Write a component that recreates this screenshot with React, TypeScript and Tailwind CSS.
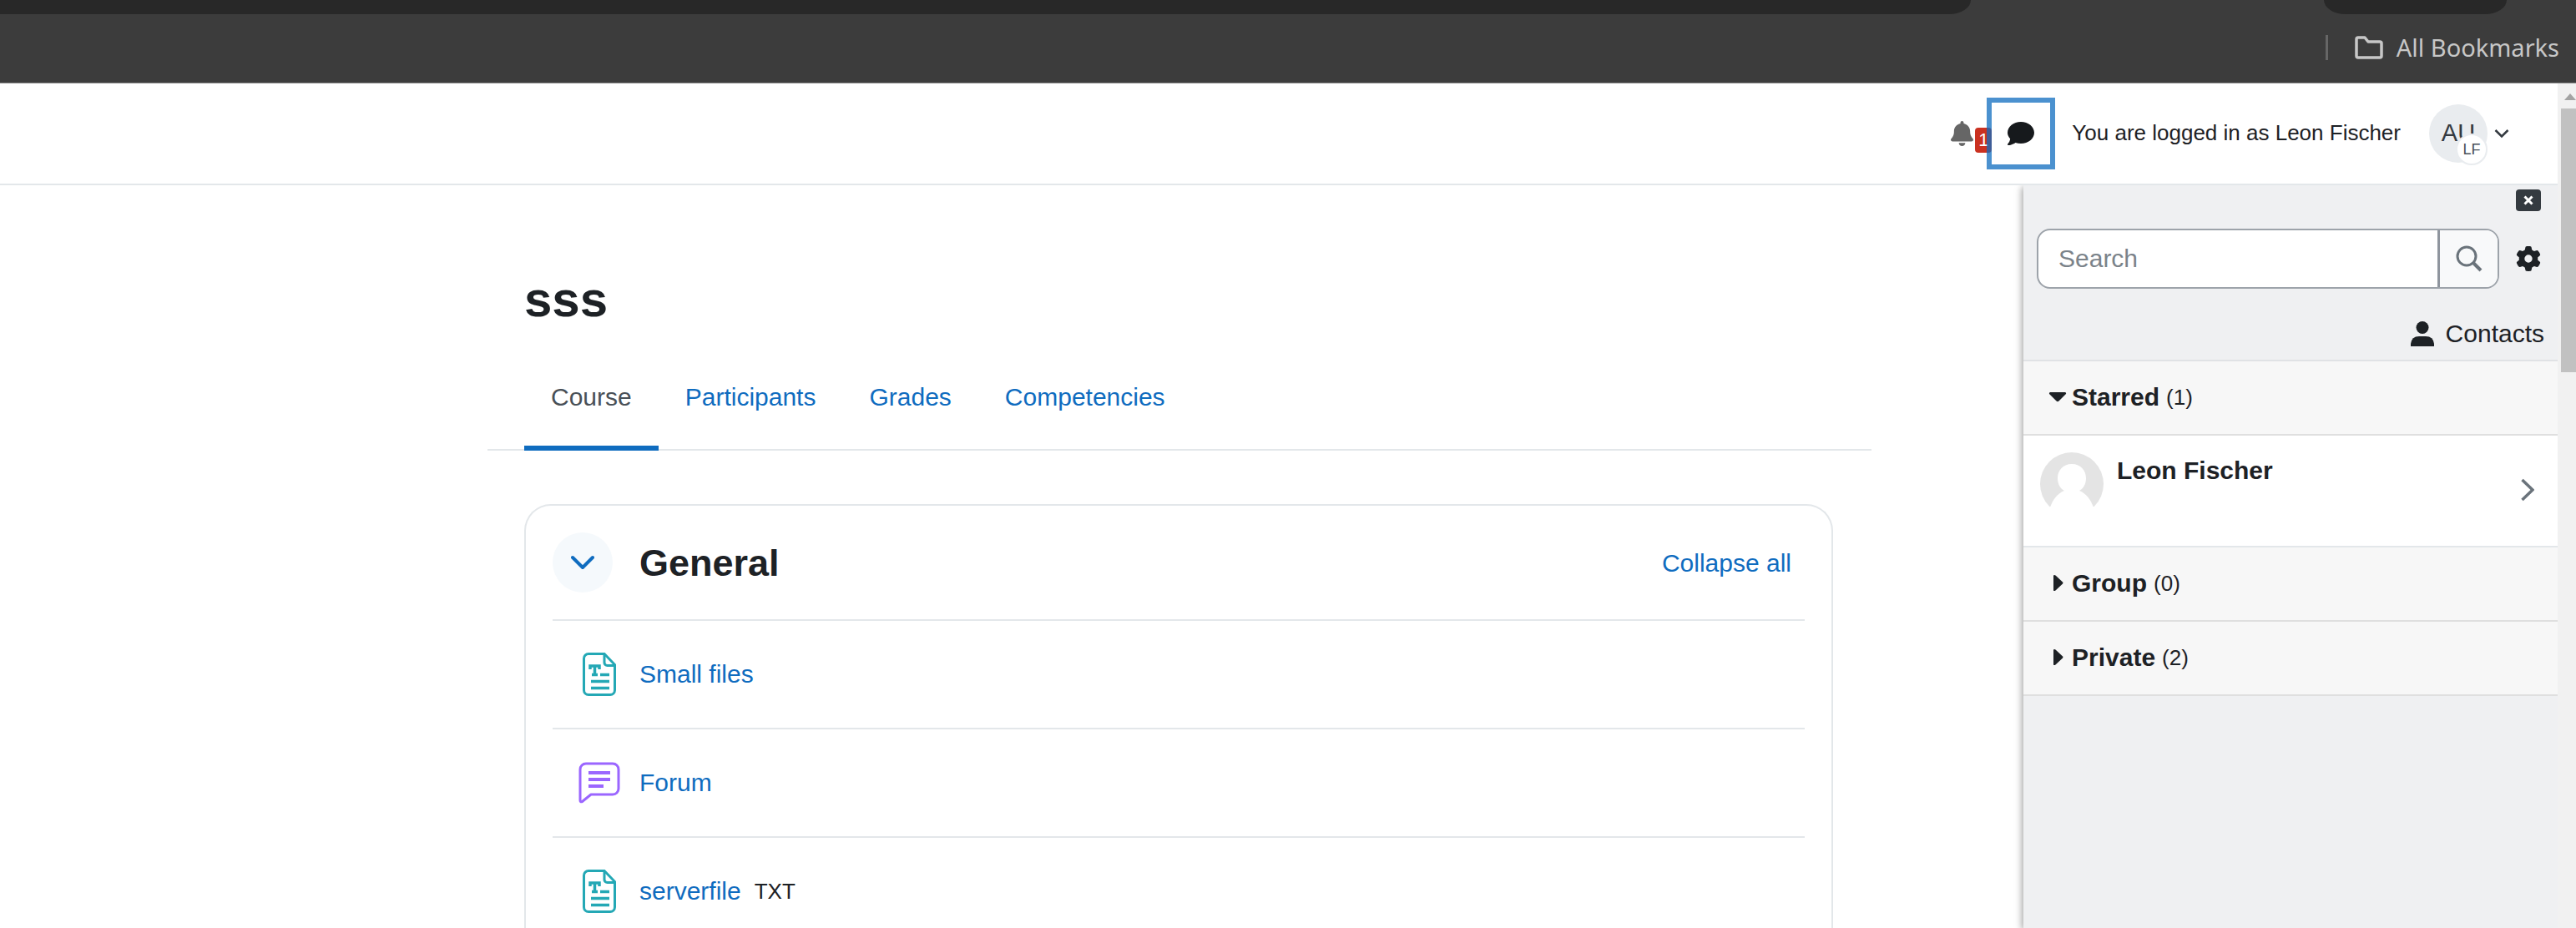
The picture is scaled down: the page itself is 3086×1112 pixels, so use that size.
import React, { useState } from "react";

const LINK = "text-[#0f6cbf]";

function FileIcon() {
  return (
    <svg viewBox="0 0 40 52" className="h-[52px] w-10" fill="none" stroke="#24a8b5" strokeWidth="3">
      <path d="M7 1.5H26L38.500 14.500V45a5.500 5.500 0 0 1-5.500 5.500H7A5.500 5.500 0 0 1 1.500 45V7A5.500 5.500 0 0 1 7 1.500Z" />
      <path d="M26 2V12a3.500 3.500 0 0 0 3.500 3.500H38" />
      <path d="M9 20V16H20V20M14.500 16V26M11 26.500H18M21 26.500H32M10 34.500H32M10 42.500H32" strokeWidth="3.500" />
    </svg>
  );
}

function ForumIcon() {
  return (
    <svg viewBox="0 0 50 50" className="h-[50px] w-[50px]" fill="none" stroke="#9b66ff" strokeWidth="3" strokeLinejoin="round">
      <path d="M9 2H41a7 7 0 0 1 7 7V32a7 7 0 0 1-7 7H15L4.500 47.500Q2 48.500 2 46V9a7 7 0 0 1 7-7Z" />
      <path d="M12 13H38M12 21H38M12 29H30" strokeWidth="4" />
    </svg>
  );
}

function BrowserBar() {
  return (
    <div className="h-[100px] shrink-0 border-b border-[#8c8c8c] bg-[#3c3c3c]">
      <div className="flex h-[17px] pr-[83px]">
        <div className="mr-[423px] flex-1 rounded-br-[26px_17px] bg-[#282828]" />
        <div className="w-[219px] rounded-b-[26px_17px] bg-[#282828]" />
      </div>
      <div className="flex h-20 items-center justify-end pr-5">
        <span className="mr-8 h-[30px] w-[3px] bg-[#666666]" />
        <button className="flex items-center gap-4 font-['Noto_Sans',sans-serif] text-[29px] leading-[40px] text-[#c7c7c7]">
          <svg viewBox="0 0 34 28" className="h-7 w-[34px]" fill="none" stroke="#c7c7c7" strokeWidth="3.500" strokeLinejoin="round">
            <path d="M2 4Q2 2 4 2H12L16 7H30Q32 7 32 9V24Q32 26 30 26H4Q2 26 2 24Z" />
          </svg>
          All Bookmarks
        </button>
      </div>
    </div>
  );
}

function Header() {
  return (
    <header className="flex h-[122px] shrink-0 items-center justify-end border-b-2 border-[#e3e7ea] bg-white pr-[58px]">
      <button aria-label="Notifications" className="flex items-center">
        <svg viewBox="0 0 448 512" className="h-[30px] w-[27px]" fill="#666" preserveAspectRatio="none">
          <path d="M224 0c-18 0-32 14-32 32v19C119 66 64 131 64 208v19c0 47-17 92-48 128l-8 8c-8 10-10 23-5 34s17 19 29 19h384c12 0 24-8 29-19s3-24-5-34l-8-8c-31-36-48-81-48-128v-19c0-77-55-142-128-157V32c0-18-14-32-32-32zm45 493c12-12 19-28 19-45H160c0 17 7 33 19 45s28 19 45 19 33-7 45-19z" />
        </svg>
        <span className="mt-4 ml-[2px] flex h-[30px] w-5 items-center justify-center rounded bg-[#ca3120] text-[22px] leading-none text-white">1</span>
      </button>
      <button aria-label="Messages" className="relative -ml-[6px] flex h-[86px] w-[82px] items-center justify-center border-[6px] border-[#0f6cbf]/75 bg-white bg-clip-padding">
        <svg viewBox="0 0 512 448" className="h-7 w-8" fill="#16191c">
          <path d="M512 208c0 115-115 208-256 208-37 0-72-6-104-18-12 9-31 20-54 30-24 11-53 20-82 20a16 16 0 0 1-11-27l1-1 5-6c4-5 9-12 16-22 11-18 21-42 23-69C19 290 0 251 0 208 0 93 115 0 256 0s256 93 256 208z" />
        </svg>
      </button>
      <span className="ml-5 pb-[2px] text-[26px] leading-[36px] text-[#1d2125]">You are logged in as Leon Fischer</span>
      <button aria-label="User menu" className="ml-[34px] flex items-center gap-2">
        <span className="relative flex h-[70px] w-[70px] items-center justify-center rounded-full bg-[#e9ecef] text-[29px] text-[#343a40]">
          AU
          <span className="absolute right-0 -bottom-[3px] flex h-[38px] w-[38px] items-center justify-center rounded-full border-2 border-[#e9ecef] bg-white text-[18px] text-[#495057]">LF</span>
        </span>
        <svg viewBox="0 0 18 12" className="h-3 w-[18px]" fill="none" stroke="#343a40" strokeWidth="2.500">
          <path d="M1.500 2 9 9.500 16.500 2" />
        </svg>
      </button>
    </header>
  );
}

function Section({ name, count, open, children }: { name: string; count: number; open?: boolean; children?: React.ReactNode }) {
  return (
    <section>
      <button className="flex h-[89px] w-full items-center border-b-2 border-[#dfdfdf] bg-[#f7f7f7] pb-[2px] pl-[30px] text-left text-[30px] leading-[44px] text-[#1d2125]">
        <svg viewBox="0 0 22 26" className="mr-[6px] h-[26px] w-[22px]" fill="#1d2125">
          {open ? <path d="M2 7H20Q22 8 20.500 9.500L12.500 17.500Q11 19 9.500 17.500L1.500 9.500Q0 8 2 7Z" /> : <path d="M6 3.500Q7 2.500 8.500 3.500L17 11.500Q18 12.500 17 13.500L8.500 21.500Q7 22.500 6 21.500Z" />}
        </svg>
        <span className="font-bold">{name}</span>
        <span className="ml-2 text-[26px]">({count})</span>
      </button>
      {children}
    </section>
  );
}

function Drawer() {
  const [query, setQuery] = useState("");
  return (
    <aside className="w-[640px] shrink-0 bg-[#eff0f2] text-[#1d2125] shadow-[-2px_2px_8px_rgba(0,0,0,0.35)]">
      <div className="flex justify-end pt-[5px] pr-5">
        <button aria-label="Close" className="flex h-[26px] w-[30px] items-center justify-center rounded bg-[#343a40]">
          <svg viewBox="0 0 12 12" className="h-3 w-3" stroke="#fff" strokeWidth="3">
            <path d="M1.500 1.500 10.500 10.500M10.500 1.500 1.500 10.500" />
          </svg>
        </button>
      </div>
      <div className="mt-[21px] flex items-center pr-5 pl-4">
        <form className="flex h-[72px] flex-1 overflow-hidden rounded-2xl border-2 border-[#9da3aa] bg-white">
          <input
            aria-label="Search"
            placeholder="Search"
            value={query}
            onChange={(e) => setQuery(e.target.value)}
            className="min-w-0 flex-1 px-6 pb-[2px] text-[30px] outline-none placeholder:text-[#7b838a]"
          />
          <button type="button" aria-label="Submit search" className="flex w-[72px] items-center justify-center border-l-[3px] border-[#8f959e] bg-[#f8f9fa]">
            <svg viewBox="0 0 32 32" className="h-8 w-8" fill="none" stroke="#6a737b" strokeWidth="3">
              <circle cx="13" cy="13" r="11" />
              <path d="M20.500 20.500 30 30" strokeWidth="4" />
            </svg>
          </button>
        </form>
        <button aria-label="Settings" className="ml-5">
          <svg viewBox="0 0 512 512" className="h-[30px] w-[30px]" fill="#1d2125">
            <path d="M496 167c3 9 0 18-6 25l-44 39c1 8 2 17 2 25s-1 17-2 25l44 39c6 7 9 16 6 25-4 12-10 24-16 35l-5 8c-7 11-14 22-22 32-6 7-16 10-25 7l-55-18c-14 10-28 19-44 25l-12 57c-2 10-9 17-18 18-14 2-28 4-43 4s-29-2-43-4c-9-1-16-8-18-18l-12-57c-16-6-30-15-44-25l-55 18c-9 3-19 0-25-7-8-10-15-21-22-32l-5-8c-6-11-12-23-16-35-3-9 0-18 6-25l44-39c-1-8-2-17-2-25s1-17 2-25l-44-39c-6-7-9-16-6-25 4-12 10-24 16-35l5-8c7-11 14-22 22-32 6-7 16-10 25-7l55 18c14-10 28-19 44-25l12-57c2-10 9-17 18-18 14-2 28-4 43-4s29 2 43 4c9 1 16 8 18 18l12 57c16 6 30 15 44 25l55-18c9-3 19 0 25 7 8 10 15 21 22 32l5 8c6 11 12 23 16 35zM256 336a80 80 0 1 0 0-160 80 80 0 1 0 0 160z" />
          </svg>
        </button>
      </div>
      <div className="mt-8 flex justify-end border-b-2 border-[#e0e2e5] pr-4 pb-[9px]">
        <a href="#contacts" className="flex items-center gap-[14px] text-[30px] leading-[44px]">
          <svg viewBox="0 0 28 30" className="h-[30px] w-7" fill="#1d2125">
            <circle cx="14" cy="7.500" r="7.500" />
            <path d="M0 30V27Q1 18 10 18H18Q27 18 28 27V30Z" />
          </svg>
          Contacts
        </a>
      </div>
      <Section name="Starred" count={1} open>
        <a href="#conversation" className="flex h-[134px] border-b-2 border-[#e3e7ea] bg-white pt-5 pr-7 pl-5">
          <svg viewBox="0 0 76 76" className="h-[76px] w-[76px]">
            <circle cx="38" cy="38" r="38" fill="#e4e4e4" />
            <path d="M38 14C27 14 21 22 21 31C21 39 25 44 29 46C21 49 15 57 12 66Q24 76 38 76T64 66C61 57 55 49 47 46C51 44 55 39 55 31C55 22 49 14 38 14Z" fill="#fff" />
            <path d="M12 65 4 78H72L64 65Z" fill="#fff" />
          </svg>
          <span className="ml-4 flex-1 text-[30px] leading-[44px] font-bold">Leon Fischer</span>
          <svg viewBox="0 0 16 28" className="mt-[31px] h-7 w-4" fill="none" stroke="#6a737b" strokeWidth="3.500">
            <path d="M1.500 2 14 14 1.500 26" />
          </svg>
        </a>
      </Section>
      <Section name="Group" count={0} />
      <Section name="Private" count={2} />
    </aside>
  );
}

const tabs = ["Course", "Participants", "Grades", "Competencies"];
const activities = [
  { name: "Small files", icon: <FileIcon /> },
  { name: "Forum", icon: <ForumIcon /> },
  { name: "serverfile", icon: <FileIcon />, badge: "TXT" },
];

function Course() {
  return (
    <main className="min-w-0 flex-1 overflow-hidden bg-white pr-[182px] pl-[584px] text-[#1d2125]">
      <h1 className="mt-[102px] pl-11 text-[60px] leading-[70px] font-bold">sss</h1>
      <nav className="mt-6 flex border-b-2 border-[#e3e7ea] pl-11">
        {tabs.map((tab, i) => (
          <a
            key={tab}
            href={"#" + tab.toLowerCase()}
            className={
              i === 0
                ? "-mb-[2px] h-[122px] border-b-[6px] border-[#0f6cbf] px-8 pt-[36px] text-[30px] leading-[44px] text-[#495057]"
                : "h-[120px] px-8 pt-[36px] text-[30px] leading-[44px] text-[#0f6cbf]"
            }
          >
            {tab}
          </a>
        ))}
      </nav>
      <section className="mr-[46px] ml-11 mt-16 rounded-t-[32px] border-2 border-b-0 border-[#e3e7ea] px-8 pt-8">
        <div className="flex h-[104px] items-start pr-4">
          <button aria-label="Collapse General" className="flex h-[72px] w-[72px] items-center justify-center rounded-full bg-[#f5f9fc]">
            <svg viewBox="0 0 28 18" className="h-[18px] w-7" fill="none" stroke="#0f6cbf" strokeWidth="4" strokeLinecap="round" strokeLinejoin="round">
              <path d="M2 3 14 15 26 3" />
            </svg>
          </button>
          <h2 className="ml-8 flex-1 text-[45px] leading-[74px] font-bold">General</h2>
          <button className={`text-[30px] leading-[74px] ${LINK}`}>Collapse all</button>
        </div>
        <ul>
          {activities.map((a) => (
            <li key={a.name} className="flex h-[130px] items-center border-t-2 border-[#e3e7ea]">
              <span className="ml-7 flex w-[56px] justify-center">{a.icon}</span>
              <a href="#activity" className={`ml-5 text-[30px] leading-[44px] ${LINK}`}>
                {a.name}
              </a>
              {a.badge && <span className="ml-4 text-[26px] leading-[44px]">{a.badge}</span>}
            </li>
          ))}
        </ul>
      </section>
    </main>
  );
}

export default function App() {
  return (
    <div className="flex h-screen flex-col overflow-hidden font-['Liberation_Sans',Arial,sans-serif]">
      <BrowserBar />
      <div className="flex min-h-0 flex-1">
        <div className="flex min-w-0 flex-1 flex-col overflow-hidden">
          <Header />
          <div className="flex min-h-0 flex-1 overflow-hidden">
            <Course />
            <Drawer />
          </div>
        </div>
        <div className="w-[22px] shrink-0 bg-[#f1f1f1] pl-1">
          <svg viewBox="0 0 18 30" className="h-[30px] w-[18px]" fill="#a3a3a3">
            <path d="M4 20 11 12 18 20Z" />
          </svg>
          <div className="h-[316px] bg-[#c1c1c1]" />
        </div>
      </div>
    </div>
  );
}
